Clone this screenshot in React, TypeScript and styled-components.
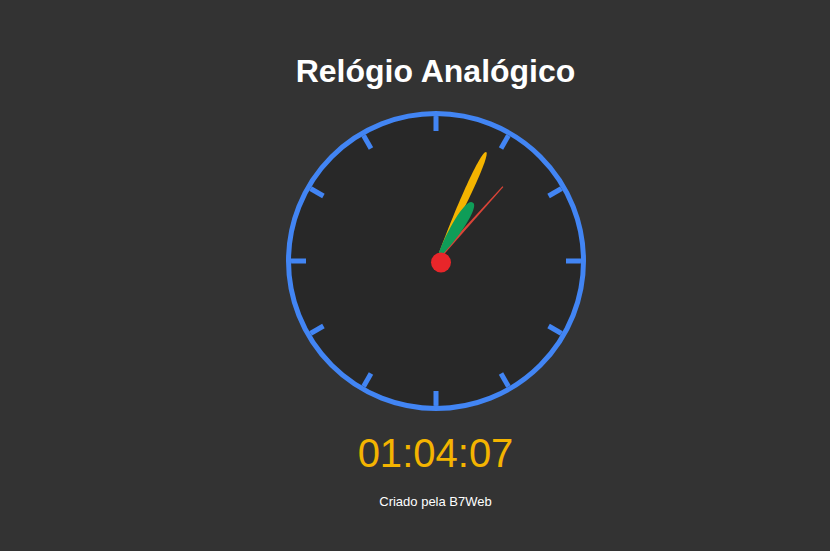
import React from "react";
import styled, { createGlobalStyle } from "styled-components";

const GlobalStyle = createGlobalStyle`
  html, body {
    margin: 0;
    padding: 0;
    background: #333333;
  }
  body {
    font-family: "Liberation Sans", Arial, Helvetica, sans-serif;
  }
`;

const Page = styled.main`
  display: flex;
  flex-direction: column;
  align-items: center;
  padding: 53px 0 0 41px;
`;

const Title = styled.h1`
  margin: 0 0 21px;
  font-size: 32px;
  font-weight: bold;
  line-height: normal;
  color: #ffffff;
`;

const Face = styled.div`
  width: 290px;
  height: 290px;
  border: 5px solid #4285f4;
  border-radius: 50%;
  background: #282828;
  margin-bottom: 20px;
  overflow: hidden;
`;

const Dial = styled.svg`
  display: block;
  width: 290px;
  height: 290px;
`;

const Digital = styled.div`
  font-size: 40px;
  line-height: normal;
  color: #f4b400;
  margin-bottom: 18px;
`;

const Credit = styled.footer`
  font-size: 13px;
  line-height: normal;
  color: #ffffff;
`;

const C = 145;

const leaf = (len: number, a: number, p1: number, p2: number) =>
  `M0,0 C${a},${-len * p1} ${a},${-len * p2} 0,${-len} C${-a},${-len * p2} ${-a},${-len * p1} 0,0 Z`;

const needle = (len: number, base: number, tip: number) =>
  `M${-base},0 L${-tip},${-len} L${tip},${-len} L${base},0 Z`;

const Hand: React.FC<{ angle: number; d: string; color: string }> = ({ angle, d, color }) => (
  <g transform={`translate(${C} ${C}) rotate(${angle})`}>
    <path d={d} fill={color} />
  </g>
);

const pad = (n: number) => String(n).padStart(2, "0");

export default function App() {
  const h = 1;
  const m = 4;
  const s = 7;
  const secAngle = s * 6;
  const minAngle = m * 6 + s * 0.1;
  const hourAngle = (h % 12) * 30 + m * 0.5 + s * (0.5 / 60);

  const ticks = Array.from({ length: 12 }, (_, i) => i * 30);

  return (
    <>
      <GlobalStyle />
      <Page>
        <Title>Relógio Analógico</Title>
        <Face>
          <Dial viewBox="0 0 290 290">
            {ticks.map((a) => (
              <g key={a} transform={`translate(${C} ${C}) rotate(${a})`}>
                <line x1="0" y1={-150} x2="0" y2={-130} stroke="#4285f4" strokeWidth="5" />
              </g>
            ))}
            <Hand angle={secAngle} d={needle(100, 1.6, 0.6)} color="#db4437" />
            <Hand angle={minAngle} d={leaf(120, 5.2, 0.5, 1.0)} color="#f4b400" />
            <Hand angle={hourAngle} d={leaf(69, 8, 0.45, 1.02)} color="#0f9d58" />
            <circle cx={C + 5} cy={C + 1.5} r="10" fill="#e8262a" />
          </Dial>
        </Face>
        <Digital>
          {pad(h)}:{pad(m)}:{pad(s)}
        </Digital>
        <Credit>Criado pela B7Web</Credit>
      </Page>
    </>
  );
}
